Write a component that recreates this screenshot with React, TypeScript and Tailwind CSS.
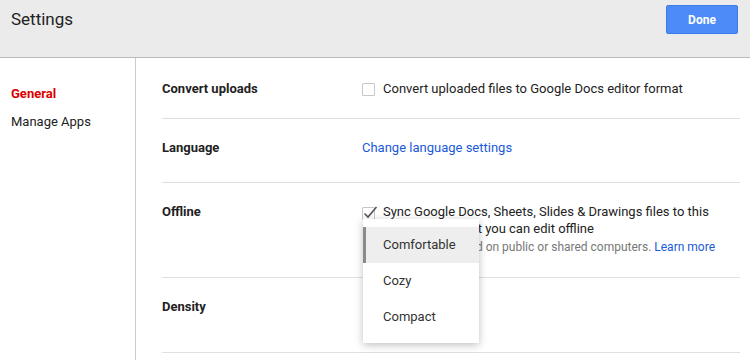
import { useState } from "react";

const densities = ["Comfortable", "Cozy", "Compact"];

const App = () => {
    const [convert, setConvert] = useState<boolean>(false);
    const [offline, setOffline] = useState<boolean>(true);
    const [density, setDensity] = useState<string>("Comfortable");

    return (
        <div className="w-[750px] h-[360px] overflow-hidden bg-white text-[#222] font-['Roboto',sans-serif] text-[13px]">
            {/* header */}
            <header className="h-[58px] bg-[#ebebeb] border-b border-[#b9b9b9] flex items-start justify-between">
                <h1 className="text-[17px] leading-5 pl-[11px] pt-[9px] text-[#222]">Settings</h1>
                <button className="mt-[5px] mr-[12px] w-[72px] h-[29px] rounded-[2px] bg-[#4d8cf8] border border-[#3b7be9] text-white text-[12px] font-bold">
                    Done
                </button>
            </header>

            <div className="flex h-[302px]">
                {/* sidebar */}
                <nav className="w-[136px] shrink-0 border-r border-[#cbcbcb] pt-[28px] pl-[11px] flex flex-col gap-3">
                    <a className="text-[#dd0000] font-bold leading-4">General</a>
                    <a className="leading-4">Manage Apps</a>
                </nav>

                {/* content */}
                <main className="flex-1 pl-[26px] pr-[10px]">
                    <div className="h-[61px] border-b border-[#e0e0e0] pt-[23px] flex items-start">
                        <div className="w-[200px] font-bold leading-4">Convert uploads</div>
                        <label className="flex items-center gap-[8px] leading-4">
                            <span
                                onClick={() => setConvert(!convert)}
                                className="w-[13px] h-[13px] border border-[#c6c6c6] rounded-[1px] bg-white"
                            />
                            Convert uploaded files to Google Docs editor format
                        </label>
                    </div>

                    <div className="h-[64px] border-b border-[#e0e0e0] pt-[21px] flex items-start">
                        <div className="w-[200px] font-bold leading-4">Language</div>
                        <a className="text-[#1a5ad8] leading-4">Change language settings</a>
                    </div>

                    <div className="h-[95px] border-b border-[#e0e0e0] pt-[21px] flex items-start">
                        <div className="w-[200px] font-bold leading-4">Offline</div>
                        <div className="relative flex-1">
                            <div className="flex gap-[6px]">
                                <span
                                    onClick={() => setOffline(!offline)}
                                    className="relative mt-[3px] w-[13px] h-[13px] shrink-0 border border-[#c6c6c6] rounded-[1px]"
                                >
                                    {offline && (
                                        <svg className="absolute -left-[1px] -top-[4px]" width="17" height="17" viewBox="0 0 17 17">
                                            <path d="M2.5 9.5 L6 13 L14.5 3" fill="none" stroke="#555" strokeWidth="1.6" />
                                        </svg>
                                    )}
                                </span>
                                <div className="pl-[2px]">
                                    <div className="leading-[17px] -mt-[1px]">
                                        Sync Google Docs, Sheets, Slides &amp; Drawings files to this
                                        <br />
                                        computer so that you can edit offline
                                    </div>
                                    <div className="text-[12px] text-[#777] leading-4 mt-[2px]">
                                        Not recommended on public or shared computers.{" "}
                                        <a className="text-[#1a5ad8]">Learn more</a>
                                    </div>
                                </div>
                            </div>

                            {/* density menu */}
                            <div className="absolute left-[1px] top-[15px] w-[116px] py-2 bg-white shadow-[0_2px_8px_rgba(0,0,0,0.25)] z-10">
                                {densities.map((d) => (
                                    <div
                                        key={d}
                                        onClick={() => setDensity(d)}
                                        className={`h-9 flex items-center pl-[17px] text-[13px] text-[#333] border-l-[3px] ${density === d ? "bg-[#eeeeee] border-[#8a8a8a]" : "border-transparent"
                                            }`}
                                    >
                                        {d}
                                    </div>
                                ))}
                            </div>
                        </div>
                    </div>

                    <div className="h-[75px] border-b border-[#e0e0e0] pt-[21px] flex items-start">
                        <div className="w-[200px] font-bold leading-4">Density</div>
                    </div>
                </main>
            </div>
        </div>
    );
};

export default App;
